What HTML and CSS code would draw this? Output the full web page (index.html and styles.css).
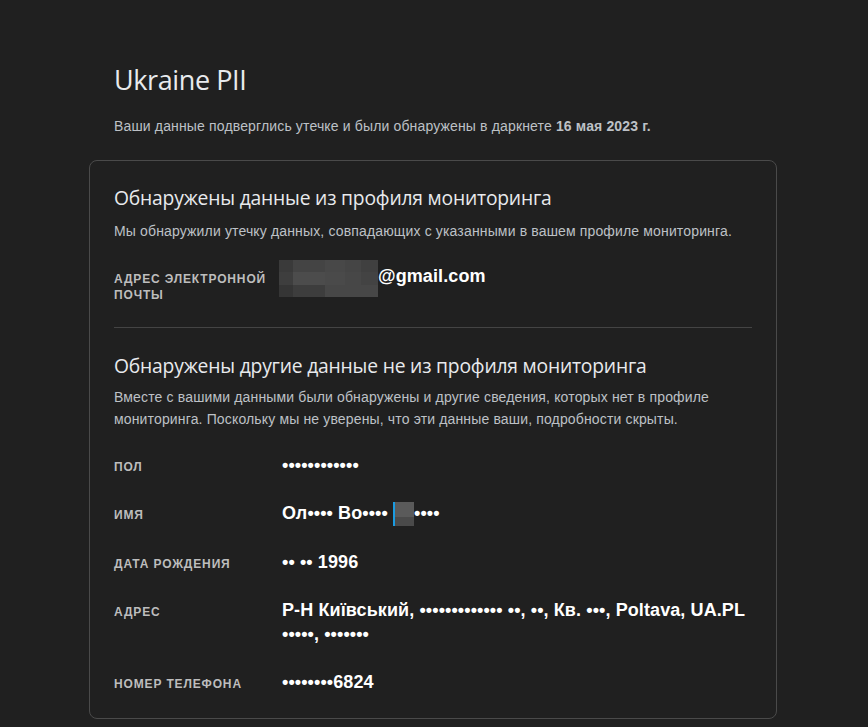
FILE: index.html
```html
<!DOCTYPE html>
<html lang="ru">
<head>
<meta charset="utf-8">
<link rel="stylesheet" href="styles.css">
</head>
<body>
<main class="page">
  <h1 class="title">Ukraine PII</h1>
  <p class="subtitle">Ваши данные подверглись утечке и были обнаружены в даркнете <b>16 мая 2023 г.</b></p>
  <section class="card">
    <h2 class="section-title">Обнаружены данные из профиля мониторинга</h2>
    <p class="desc desc-first">Мы обнаружили утечку данных, совпадающих с указанными в вашем профиле мониторинга.</p>
    <div class="row row-email">
      <div class="label">Адрес электронной почты</div>
      <div class="value email"><span class="blur"><i></i><i></i><i></i><i></i><i></i><i></i><i></i><i></i><i></i><i></i><i></i><i></i></span>@gmail.com</div>
    </div>
    <hr class="divider">
    <h2 class="section-title">Обнаружены другие данные не из профиля мониторинга</h2>
    <p class="desc">Вместе с вашими данными были обнаружены и другие сведения, которых нет в профиле мониторинга. Поскольку мы не уверены, что эти данные ваши, подробности скрыты.</p>
    <div class="rows">
      <div class="row">
        <div class="label">Пол</div>
        <div class="value">••••••••••••</div>
      </div>
      <div class="row">
        <div class="label">Имя</div>
        <div class="value">Ол•••• Во•••• <span class="blur-small"></span>••••</div>
      </div>
      <div class="row">
        <div class="label">Дата рождения</div>
        <div class="value">•• •• 1996</div>
      </div>
      <div class="row">
        <div class="label">Адрес</div>
        <div class="value">Р-Н Київський, ••••••••••••• ••, ••, Кв. •••, Poltava, UA.PL •••••, •••••••</div>
      </div>
      <div class="row">
        <div class="label">Номер телефона</div>
        <div class="value">••••••••6824</div>
      </div>
    </div>
  </section>
</main>
</body>
</html>
```
FILE: styles.css
```css
html, body {
  margin: 0;
  padding: 0;
  background: #202020;
}
body {
  color: #e8eaed;
  font-family: "Liberation Sans", Arial, sans-serif;
}
.page {
  width: 688px;
  margin-left: 89px;
  padding-top: 60px;
}
.title {
  margin: 0 0 0 25px;
  font-family: "Open Sans", Roboto, sans-serif;
  font-weight: 400;
  font-size: 27px;
  line-height: 40px;
  color: #e8eaed;
  letter-spacing: -0.4px;
}
.subtitle {
  margin: 16px 0 0 25px;
  font-size: 14px;
  line-height: 20px;
  letter-spacing: 0.15px;
  color: #bdc1c6;
}
.card {
  box-sizing: border-box;
  margin-top: 24px;
  border: 1px solid #4a4a4a;
  border-radius: 8px;
  padding: 23px 24px 24px 24px;
}
.section-title {
  margin: 0;
  font-family: "Open Sans", Roboto, sans-serif;
  font-weight: 400;
  font-size: 19.3px;
  line-height: 28px;
  color: #e8eaed;
  letter-spacing: -0.2px;
}
.desc {
  margin: 6px 0 0 0;
  font-size: 14px;
  line-height: 22px;
  letter-spacing: 0.15px;
  color: #bdc1c6;
}
.desc-first {
  margin-top: 8px;
}
.row {
  display: grid;
  grid-template-columns: 168px 1fr;
  align-items: start;
}
.row-email {
  margin-top: 22px;
}
.label {
  font-size: 12px;
  font-weight: 700;
  text-transform: uppercase;
  letter-spacing: 0.85px;
  line-height: 16px;
  color: #bdbdbd;
  padding-top: 6px;
  padding-right: 8px;
}
.row-email .label {
  padding-top: 7px;
}
.value {
  font-size: 18px;
  font-weight: 700;
  line-height: 24px;
  letter-spacing: 0.1px;
  color: #ffffff;
}
.email {
  display: flex;
  align-items: flex-start;
  margin-left: -3px;
}
.blur {
  display: grid;
  grid-template-columns: 14px 32px 20px 16px 17px;
  grid-template-rows: 12px 13px 12px;
  width: 99px;
  height: 37px;
  margin-top: -4px;
  margin-bottom: -9px;
  background: #474747;
}
.blur i:nth-child(1) { background: #3a3a3a; }
.blur i:nth-child(2) { background: #444444; }
.blur i:nth-child(3) { background: #484848; }
.blur i:nth-child(4) { background: #454545; }
.blur i:nth-child(5) { background: #404040; }
.blur i:nth-child(6) { background: #3e3e3e; }
.blur i:nth-child(7) { background: #4c4c4c; }
.blur i:nth-child(8) { background: #4a4a4a; }
.blur i:nth-child(9) { background: #474747; }
.blur i:nth-child(10) { background: #434343; }
.blur i:nth-child(11) { background: #353535; }
.blur i:nth-child(12) { background: #3d3d3d; }
.blur-small {
  display: inline-block;
  width: 19px;
  height: 24px;
  vertical-align: -7px;
  background: linear-gradient(#5a5a5a 0 62%, #4a4a4a 62%);
  border-left: 2px solid #1a9be0;
}
.divider {
  border: 0;
  border-top: 1px solid #444;
  margin: 24px 0 24px 0;
}
.rows {
  margin-top: 23px;
  display: flex;
  flex-direction: column;
  gap: 24px;
}
```
